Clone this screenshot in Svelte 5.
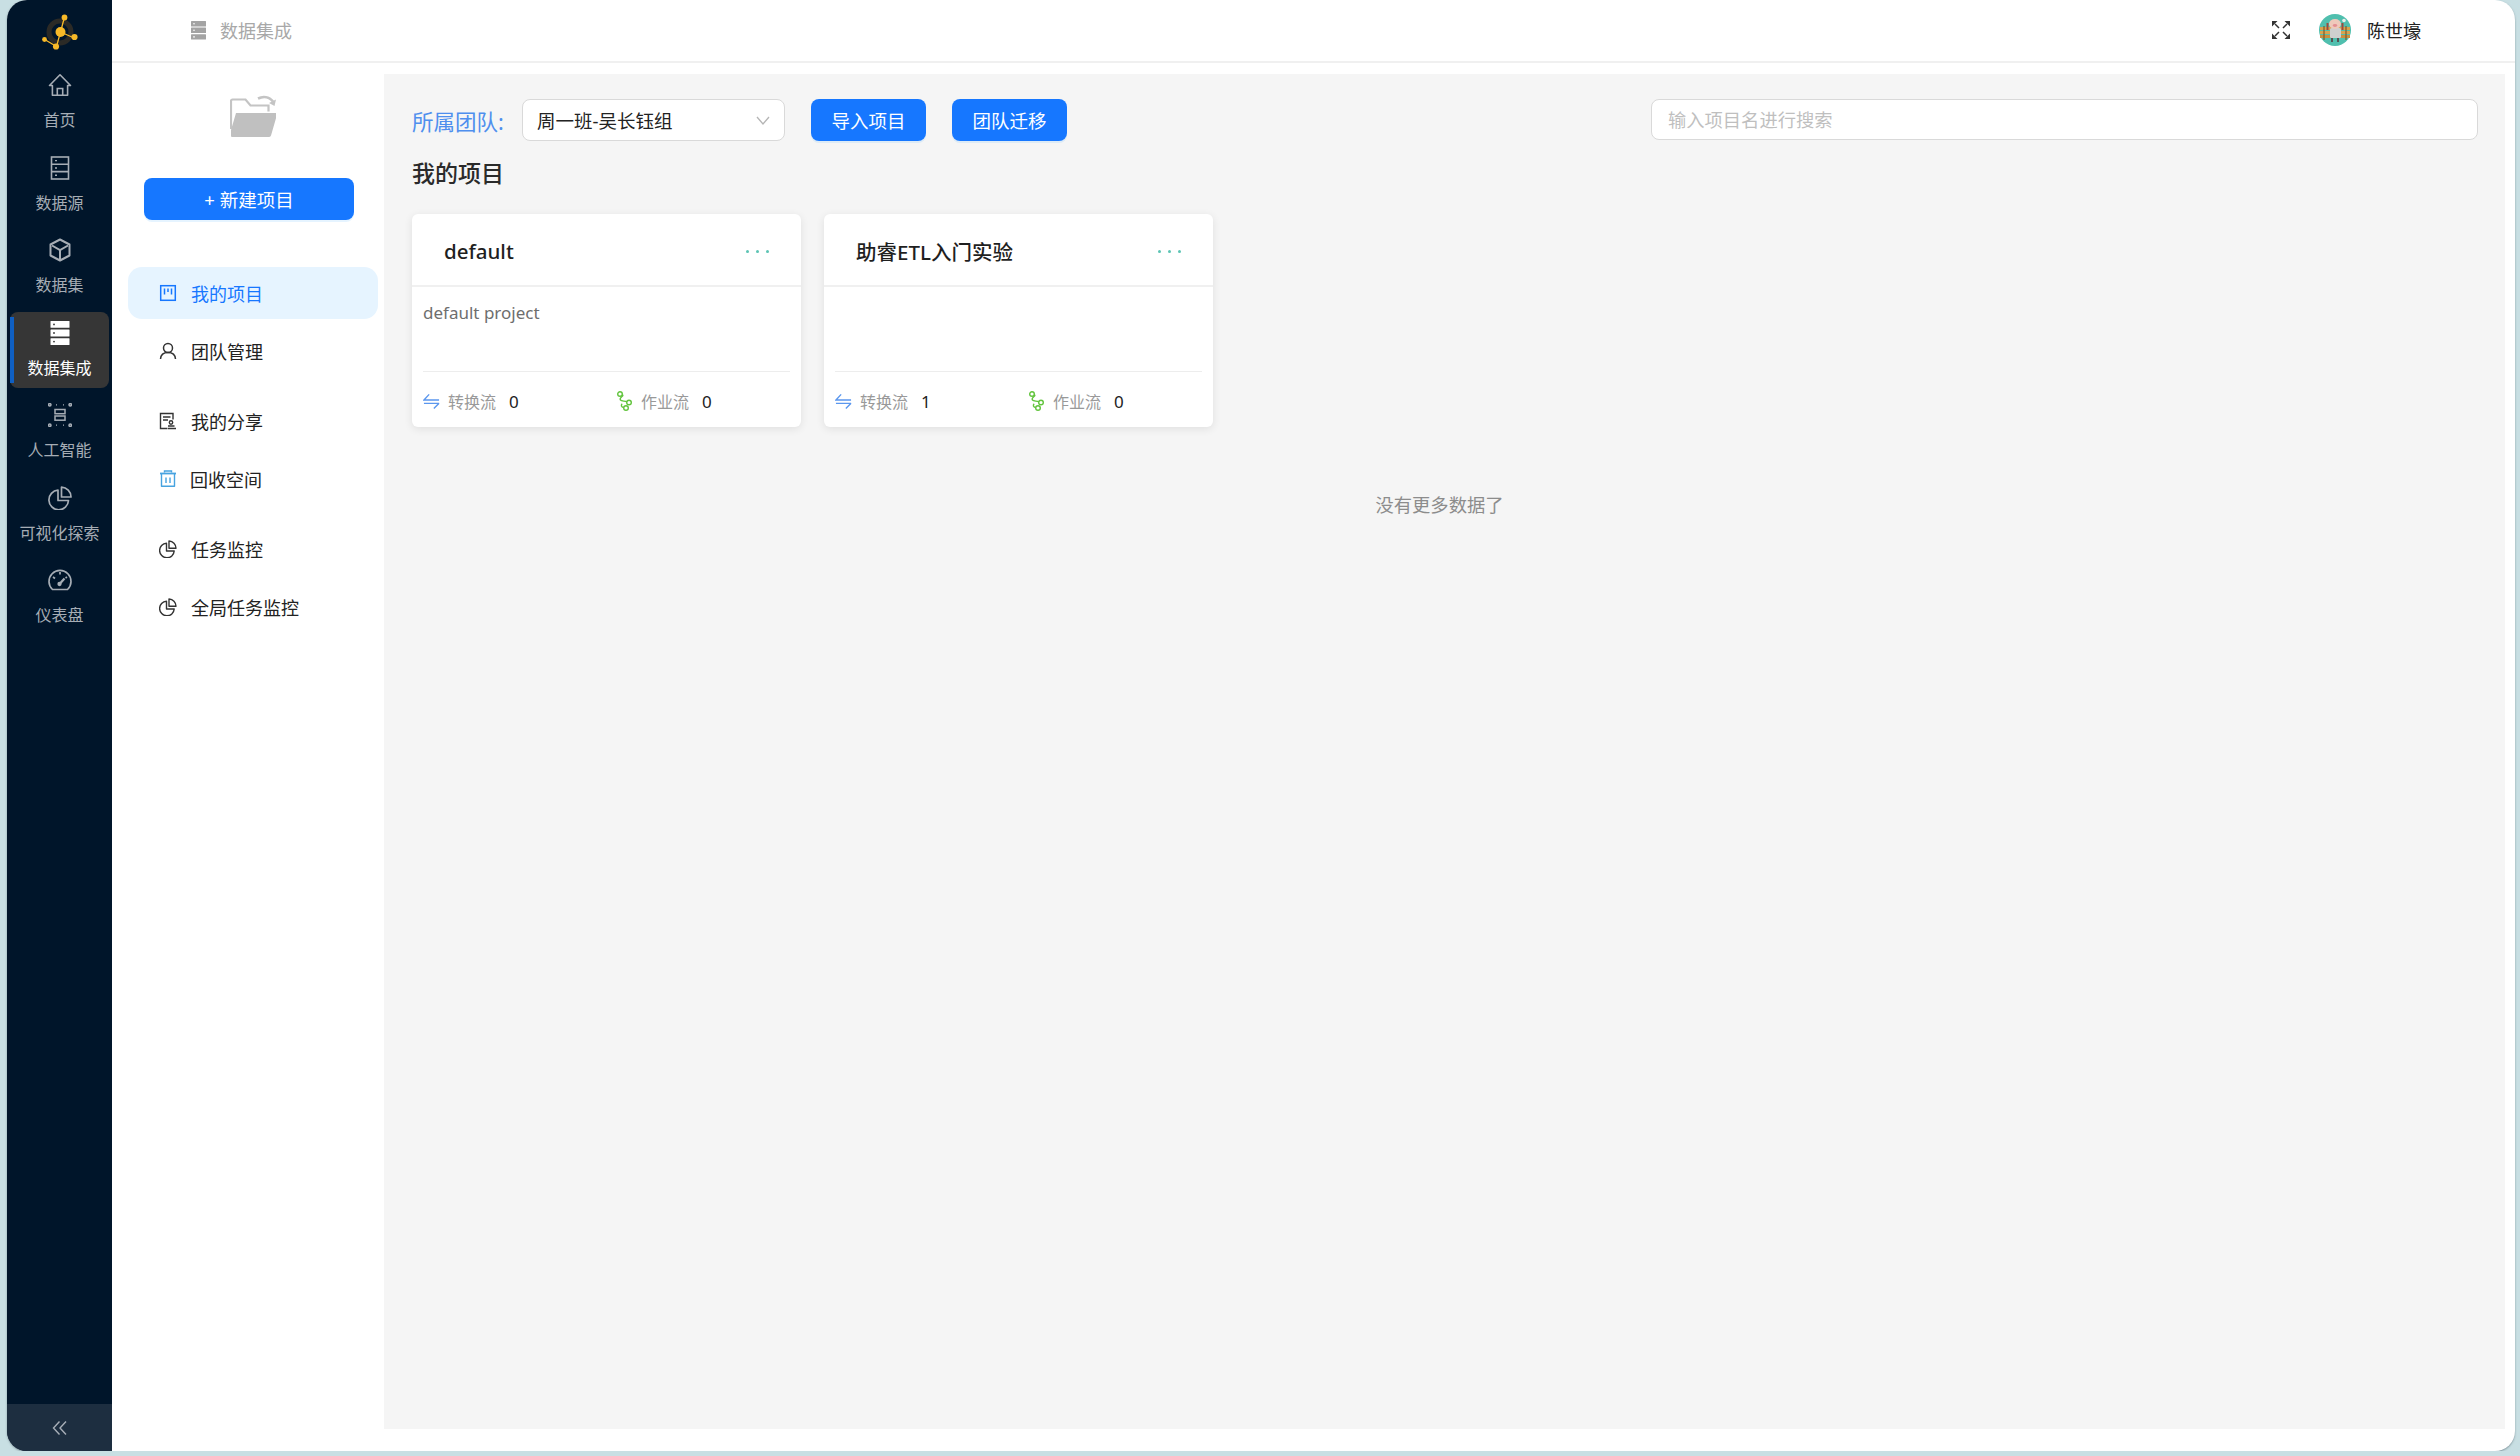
<script>
  const navItems = [
    { key: 'home', label: '首页' },
    { key: 'source', label: '数据源' },
    { key: 'dataset', label: '数据集' },
    { key: 'integration', label: '数据集成', active: true },
    { key: 'ai', label: '人工智能' },
    { key: 'vis', label: '可视化探索' },
    { key: 'dash', label: '仪表盘' }
  ];

  const menuGroups = [
    [
      { key: 'board', label: '我的项目', active: true },
      { key: 'user', label: '团队管理' }
    ],
    [
      { key: 'share', label: '我的分享' },
      { key: 'trash', label: '回收空间' }
    ],
    [
      { key: 'pie', label: '任务监控' },
      { key: 'pie', label: '全局任务监控' }
    ]
  ];

  const projects = [
    { name: 'default', desc: 'default project', trans: 0, jobs: 0 },
    { name: '助睿ETL入门实验', desc: '', trans: 1, jobs: 0 }
  ];
</script>

{#snippet navIcon(key)}
  {#if key === 'home'}
    <svg viewBox="0 0 24 24" class="nav_icon" fill="none" stroke="currentColor" stroke-width="1.6">
      <path d="M1.5 12.5 12 1.8l10.500 10.700h-2.900v9.700H4.400v-9.700z" stroke-linejoin="round" />
      <path d="M9.300 22v-6.500h5.400V22" />
    </svg>
  {:else if key === 'source'}
    <svg viewBox="0 0 24 24" class="nav_icon" fill="none" stroke="currentColor" stroke-width="1.600">
      <rect x="3.500" y="1" width="17" height="22" />
      <path d="M3.500 8.300h17M3.500 15.600h17" />
      <path d="M7 4.600h2M7 12h2M7 19.300h2" stroke-width="1.400" />
    </svg>
  {:else if key === 'dataset'}
    <svg viewBox="0 0 24 24" class="nav_icon" fill="none" stroke="currentColor" stroke-width="2">
      <path d="M12 1.500 21.500 6.500v11L12 22.500l-9.500-5v-11z" stroke-linejoin="round" />
      <path d="M4 7.500l8 4.500 8-4.500M12 12v10" />
    </svg>
  {:else if key === 'integration'}
    <svg viewBox="0 0 24 24" class="nav_icon" fill="#fff">
      <rect x="2.500" y="0" width="19" height="6.800" rx="0.500" />
      <rect x="2.500" y="8.600" width="19" height="6.800" rx="0.500" />
      <rect x="2.500" y="17.200" width="19" height="6.800" rx="0.500" />
      <circle cx="6" cy="3.400" r="0.900" fill="#333" />
      <circle cx="6" cy="12" r="0.900" fill="#333" />
      <circle cx="6" cy="20.600" r="0.900" fill="#333" />
    </svg>
  {:else if key === 'ai'}
    <svg viewBox="0 0 24 24" class="nav_icon" fill="none" stroke="currentColor" stroke-width="1.500">
      <rect x="7" y="6.500" width="10" height="4.200" />
      <rect x="7" y="13" width="10" height="4.200" />
      <circle cx="1.800" cy="1.800" r="1.200" />
      <circle cx="22.200" cy="1.800" r="1.200" />
      <circle cx="1.800" cy="22.200" r="1.200" />
      <circle cx="22.200" cy="22.200" r="1.200" />
      <path d="M8 1.800h1M15 1.800h1M8 22.200h1M15 22.200h1" stroke-width="1.200" />
    </svg>
  {:else if key === 'vis'}
    <svg viewBox="0 0 24 24" class="nav_icon" fill="none" stroke="currentColor" stroke-width="1.700">
      <path d="M10 4.200A9.800 9.800 0 1 0 20.500 14.500H10z" stroke-linejoin="round" />
      <path d="M13.500 1.200a9.800 9.800 0 0 1 9.500 9.800h-9.500z" stroke-linejoin="round" />
    </svg>
  {:else}
    <svg viewBox="0 0 24 24" class="nav_icon" fill="none" stroke="currentColor" stroke-width="1.700">
      <path d="M4.500 21.500A11 11 0 1 1 19.500 21.500z" stroke-linejoin="round" />
      <path d="M12 15.500l4.500-5" stroke-width="2.200" />
      <circle cx="11.500" cy="16" r="1.300" fill="currentColor" />
      <path d="M12 4v2.500M5 9l2 1.500M19 9l-1.500 1" />
    </svg>
  {/if}
{/snippet}

{#snippet menuIcon(key)}
  {#if key === 'board'}
    <svg viewBox="0 0 18 18" class="menu_icon" fill="none" stroke="currentColor" stroke-width="1.500">
      <rect x="1.700" y="1.700" width="14.600" height="14.600" />
      <path d="M5.500 4.500v6M9 4.500v3.500M12.500 4.500v6" />
    </svg>
  {:else if key === 'user'}
    <svg viewBox="0 0 18 18" class="menu_icon" fill="none" stroke="currentColor" stroke-width="1.500">
      <circle cx="9" cy="6" r="4.500" />
      <path d="M1.500 17c.3-4.500 3.500-6.500 7.500-6.500s7.200 2 7.500 6.500" />
    </svg>
  {:else if key === 'share'}
    <svg viewBox="0 0 18 18" class="menu_icon" fill="none" stroke="currentColor" stroke-width="1.400">
      <path d="M8 16.500H1.500v-15h12.500v6" />
      <path d="M4 5h7.500M4 8h5" />
      <circle cx="12" cy="10.500" r="1.700" />
      <path d="M8.500 16.500h8.500M9 14h6.500" stroke-width="1.600" />
    </svg>
  {:else if key === 'trash'}
    <svg viewBox="0 0 18 18" class="menu_icon trash" fill="none" stroke="currentColor" stroke-width="1.400">
      <path d="M1 3.500h16" stroke-width="1.800" />
      <path d="M5.500 2.500V1h7v1.500" />
      <path d="M2.500 4v12.300h13V4" stroke-linejoin="round" />
      <path d="M7 7.500v5.500M11 7.500v5.500" />
    </svg>
  {:else}
    <svg viewBox="0 0 18 18" class="menu_icon" fill="none" stroke="currentColor" stroke-width="1.400">
      <path d="M7.500 3.200A7.300 7.300 0 1 0 15.200 11H7.500z" stroke-linejoin="round" />
      <path d="M10 1a7.300 7.300 0 0 1 7 7.300h-7z" stroke-linejoin="round" />
    </svg>
  {/if}
{/snippet}

<div class="window">
  <aside class="sidebar">
    <div class="logo">
      <svg viewBox="0 0 40 40" width="40" height="40">
        <circle cx="20" cy="19" r="11" fill="none" stroke="#2b2a26" stroke-width="5" />
        <path d="M20.500 19 24.500 4M20.500 19l12.500 5.500M20.500 19l-4 14.500-11-6.500" stroke="#f7b928" stroke-width="1.300" fill="none" />
        <circle cx="20.500" cy="19" r="5" fill="#f7b928" />
        <circle cx="24.500" cy="4.500" r="2.900" fill="#f7b928" />
        <circle cx="34.500" cy="24" r="3.100" fill="#f7b928" />
        <circle cx="16" cy="33.500" r="3.100" fill="#f7b928" />
        <circle cx="4.500" cy="26.500" r="2.400" fill="#f7b928" />
      </svg>
    </div>
    <nav class="nav">
      {#each navItems as item}
        <div class="nav_item" class:active={item.active}>
          {@render navIcon(item.key)}
          <span>{item.label}</span>
        </div>
      {/each}
    </nav>
    <div class="collapse">
      <svg viewBox="0 0 16 16" width="16" height="16" fill="none" stroke="#a7aeb7" stroke-width="1.400">
        <path d="M7.500 1.500 1.500 8l6 6.500M14 1.500 8 8l6 6.500" />
      </svg>
    </div>
  </aside>

  <div class="main">
    <header class="topbar">
      <div class="crumb">
        <svg viewBox="0 0 16 19" width="16" height="19" fill="#a3a3a3">
          <rect width="15" height="5.400" rx="0.500" />
          <rect y="6.600" width="15" height="5.400" rx="0.500" />
          <rect y="13.200" width="15" height="5.400" rx="0.500" />
          <circle cx="3" cy="2.700" r="0.800" fill="#fff" />
          <circle cx="3" cy="9.300" r="0.800" fill="#fff" />
          <circle cx="3" cy="15.900" r="0.800" fill="#fff" />
        </svg>
        <span>数据集成</span>
      </div>
      <div class="top_right">
        <svg viewBox="0 0 18 18" width="18" height="18" class="expand">
          <path d="M0 0h5.500L0 5.500zM18 0v5.500L12.500 0zM0 18v-5.500L5.500 18zM18 18h-5.500l5.500-5.500z" fill="#333" />
          <path d="M3 3l4 4M15 3l-4 4M3 15l4-4M15 15l-4-4" stroke="#333" stroke-width="1.500" fill="none" />
        </svg>
        <svg viewBox="0 0 32 32" width="32" height="32" class="avatar">
          <circle cx="16" cy="16" r="16" fill="#50bfae" />
          <rect x="1" y="13" width="30" height="3" fill="#d9a24e" />
          <rect x="1" y="17" width="30" height="3" fill="#d9a24e" />
          <rect x="1" y="21" width="30" height="3" fill="#c98f3e" />
          <path d="M5 12v14M27 12v14" stroke="#7a5a2c" stroke-width="1.200" />
          <rect x="11" y="14" width="11" height="10" rx="1.500" fill="#cfcfcf" />
          <path d="M13 24v4M19 24v4" stroke="#555" stroke-width="2" />
          <ellipse cx="16" cy="10" rx="6" ry="5" fill="#efc9bb" />
          <ellipse cx="16" cy="11.500" rx="2.200" ry="1.400" fill="#e48f93" />
          <path d="M8.500 9v7M23.500 9v7" stroke="#9e4a3d" stroke-width="2" />
          <circle cx="25" cy="6.500" r="1.800" fill="#e8eeea" />
        </svg>
        <span class="username">陈世壕</span>
      </div>
    </header>

    <div class="page">
      <div class="panel">
        <div class="folder">
          <svg viewBox="0 0 46 42" width="46" height="42">
            <path d="M1 34V6a1.500 1.500 0 0 1 1.500-1.500h13l5 6h18v6" fill="none" stroke="#c4c4c4" stroke-width="2.200" />
            <path d="M28 3.500c5-2.500 11-2 15 3" fill="none" stroke="#c4c4c4" stroke-width="2.600" />
            <path d="M46 4.500 44.500 11l-5.500-3z" fill="#c4c4c4" />
            <path d="M1 41V35l5-17h39.500a1.500 1.500 0 0 1 1.400 2L41 40.500a2 2 0 0 1-2 1.500H2a1 1 0 0 1-1-1z" fill="#c0c0c0" />
          </svg>
        </div>
        <button class="new_button">+ 新建项目</button>
        <div class="menu">
          {#each menuGroups as group}
            <div class="menu_group">
              {#each group as item}
                <div class="menu_item" class:active={item.active}>
                  {@render menuIcon(item.key)}
                  <span class:shift={item.key === 'trash'}>{item.label}</span>
                </div>
              {/each}
            </div>
          {/each}
        </div>
      </div>

      <main class="content">
        <div class="toolbar">
          <span class="team_label">所属团队:</span>
          <div class="team_select">
            <span>周一班-吴长钰组</span>
            <svg viewBox="0 0 14 9" width="14" height="9" fill="none" stroke="#b5b5b5" stroke-width="1.300">
              <path d="M1 1l6 7 6-7" />
            </svg>
          </div>
          <button class="primary">导入项目</button>
          <button class="primary">团队迁移</button>
          <div class="search">输入项目名进行搜索</div>
        </div>

        <h2 class="section_title">我的项目</h2>

        <div class="cards">
          {#each projects as project}
            <article class="card">
              <div class="card_head">
                <span class="card_title">{project.name}</span>
                <span class="dots"><i></i><i></i><i></i></span>
              </div>
              <div class="card_desc">{project.desc}</div>
              <div class="card_stats">
                <div class="stat">
                  <svg viewBox="0 0 18 18" width="18" height="18" fill="none" stroke="#5b97ee" stroke-width="1.500">
                    <path d="M6.500 2 1 8h16M17 11.500H1M17 11.500 11.500 17" />
                  </svg>
                  <span class="stat_name">转换流</span>
                  <span class="stat_value">{project.trans}</span>
                </div>
                <div class="stat">
                  <svg viewBox="0 0 16 20" width="16" height="20" fill="none" stroke="#62c43d" stroke-width="1.400">
                    <circle cx="3.500" cy="3" r="2.300" />
                    <circle cx="12.500" cy="11.500" r="2.300" />
                    <circle cx="9.500" cy="17" r="2.300" />
                    <path d="M5.800 3.500c2.500 1.500-3.800 3-1.800 5.500 1.200 1.300 4 .8 6.300 1.800M7.200 16.500c-2.500-.5-3-2.500-1.500-3.800" />
                  </svg>
                  <span class="stat_name">作业流</span>
                  <span class="stat_value">{project.jobs}</span>
                </div>
              </div>
            </article>
          {/each}
        </div>

        <p class="no_more">没有更多数据了</p>
      </main>
    </div>
  </div>
</div>

<style>
  :global(body) {
    background: #c8dfe3;
    font-family: "Noto Sans", "Noto Sans CJK SC", sans-serif;
  }

  .window {
    display: flex;
    width: 2508px;
    height: 1451px;
    margin-left: 7px;
    background: #fff;
    border-radius: 20px;
    overflow: hidden;
    box-shadow: 0 1px 2px rgba(60, 80, 90, 0.5);
  }

  .sidebar {
    width: 105px;
    flex: none;
    display: flex;
    flex-direction: column;
    background: #00152a;
  }

  .logo {
    height: 64px;
    flex: none;
    display: flex;
    justify-content: center;
    padding-top: 13px;
    box-sizing: border-box;
  }

  .nav {
    flex: 1;
    display: flex;
    flex-direction: column;
    gap: 6.5px;
    padding: 0 3px;
  }

  .nav_item {
    position: relative;
    height: 76px;
    display: flex;
    flex-direction: column;
    align-items: center;
    justify-content: flex-start;
    padding-top: 9px;
    box-sizing: border-box;
    color: #a6adb5;
    font-size: 16px;
    line-height: 24px;
    border-radius: 8px;
  }

  .nav_item.active {
    background: #363636;
    color: #fff;
  }

  .nav_item.active::before {
    content: '';
    position: absolute;
    left: 0;
    top: 5px;
    bottom: 5px;
    width: 4px;
    background: #0f5fc2;
  }

  .nav_icon {
    width: 24px;
    height: 24px;
    margin-bottom: 11px;
    flex: none;
  }

  .collapse {
    height: 47px;
    flex: none;
    display: flex;
    align-items: center;
    justify-content: center;
    background: #1d2e40;
  }

  .main {
    flex: 1;
    display: flex;
    flex-direction: column;
    min-width: 0;
  }

  .topbar {
    height: 63px;
    flex: none;
    box-sizing: border-box;
    display: flex;
    align-items: center;
    justify-content: space-between;
    border-bottom: 2px solid #f0f0f0;
    padding: 0 94px 1px 79px;
  }

  .crumb {
    display: flex;
    align-items: center;
    gap: 13px;
    color: #a8a8a8;
    font-size: 18px;
  }

  .top_right {
    display: flex;
    align-items: center;
    color: #222;
    font-size: 18px;
  }

  .expand {
    margin-right: 29px;
    margin-left: -2px;
  }

  .avatar {
    margin-right: 16px;
  }

  .username {
    color: #222;
  }

  .page {
    flex: 1;
    display: flex;
    min-height: 0;
    padding: 11px 10px 22px 0;
  }

  .panel {
    width: 272px;
    flex: none;
    display: flex;
    flex-direction: column;
    align-items: flex-start;
  }

  .folder {
    margin: 21px 0 0 118px;
    height: 42px;
  }

  .new_button {
    margin: 41px 0 0 32px;
    width: 210px;
    height: 42px;
    border: none;
    border-radius: 8px;
    background: #1677ff;
    color: #fff;
    font: inherit;
    font-size: 18.5px;
    box-shadow: 0 2px 0 rgba(5, 145, 255, 0.1);
  }

  .menu {
    margin: 47px 0 0 16px;
    width: 250px;
    display: flex;
    flex-direction: column;
    gap: 18px;
  }

  .menu_group {
    display: flex;
    flex-direction: column;
    gap: 6px;
  }

  .menu_item {
    height: 52px;
    display: flex;
    align-items: center;
    padding-left: 31px;
    border-radius: 14px;
    font-size: 18px;
    color: #222;
  }

  .menu_item.active {
    background: #e6f4ff;
    color: #1677ff;
  }

  .menu_icon {
    width: 18px;
    height: 18px;
    margin-right: 14px;
    flex: none;
    color: #333;
  }

  .menu_item.active .menu_icon {
    color: #1677ff;
  }

  .menu_icon.trash {
    color: #47a3e0;
  }

  .shift {
    margin-left: -1px;
    margin-top: -1px;
  }

  .content {
    flex: 1;
    min-width: 0;
    background: #f5f5f5;
    padding: 25px 27px 0 28px;
    box-sizing: border-box;
  }

  .toolbar {
    display: flex;
    align-items: center;
    height: 42px;
  }

  .team_label {
    width: 110px;
    flex: none;
    color: #4f8fee;
    font-size: 21.5px;
    white-space: nowrap;
  }

  .team_select {
    width: 263px;
    height: 42px;
    flex: none;
    box-sizing: border-box;
    display: flex;
    align-items: center;
    justify-content: space-between;
    padding: 0 14px;
    background: #fff;
    border: 1px solid #d9d9d9;
    border-radius: 8px;
    font-size: 18.5px;
    color: #222;
  }

  .primary {
    width: 115px;
    height: 42px;
    margin-left: 26px;
    border: none;
    border-radius: 8px;
    background: #1677ff;
    color: #fff;
    font: inherit;
    font-size: 18.5px;
    box-shadow: 0 2px 0 rgba(5, 145, 255, 0.1);
  }

  .search {
    width: 827px;
    height: 41px;
    margin-left: auto;
    margin-top: -2px;
    box-sizing: border-box;
    padding-left: 16px;
    display: flex;
    align-items: center;
    background: #fff;
    border: 1px solid #d9d9d9;
    border-radius: 8px;
    color: #bfbfbf;
    font-size: 18.3px;
  }

  .section_title {
    margin: 16px 0 0;
    font-size: 23px;
    line-height: 32px;
    font-weight: 500;
    color: #2a2a2a;
  }

  .cards {
    display: flex;
    gap: 23px;
    margin-top: 25px;
  }

  .card {
    width: 389px;
    height: 213px;
    box-sizing: border-box;
    display: flex;
    flex-direction: column;
    background: #fff;
    border-radius: 6px;
    box-shadow: 0 2px 8px rgba(0, 0, 0, 0.09);
    padding: 0 11px;
  }

  .card_head {
    height: 73px;
    flex: none;
    display: flex;
    align-items: center;
    justify-content: space-between;
    margin: 0 -11px;
    padding: 2px 32px 0;
    box-sizing: border-box;
    border-bottom: 2px solid #f0f0f0;
  }

  .card_title {
    font-size: 20.5px;
    font-weight: 500;
    color: #1f1f1f;
  }

  .dots {
    display: flex;
    gap: 7px;
    margin-top: 1px;
  }

  .dots i {
    width: 3px;
    height: 3px;
    border-radius: 50%;
    background: #5cc4b4;
  }

  .card_desc {
    height: 85px;
    flex: none;
    padding-top: 13px;
    box-sizing: border-box;
    border-bottom: 1px solid #ededed;
    font-size: 17px;
    line-height: 26px;
    color: #6e6e6e;
  }

  .card_stats {
    flex: 1;
    display: flex;
    align-items: center;
    padding-top: 3px;
  }

  .stat {
    display: flex;
    align-items: center;
  }

  .stat:first-child {
    width: 193px;
  }

  .stat svg {
    flex: none;
    width: 17px;
    margin-right: 8px;
  }

  .stat_name {
    font-size: 16px;
    color: #999;
    margin-right: 13px;
  }

  .stat_value {
    font-size: 17px;
    color: #222;
  }

  .no_more {
    margin: 65px 0 0;
    padding-right: 11px;
    text-align: center;
    color: #8c8c8c;
    font-size: 18.3px;
    line-height: 26px;
  }
</style>
